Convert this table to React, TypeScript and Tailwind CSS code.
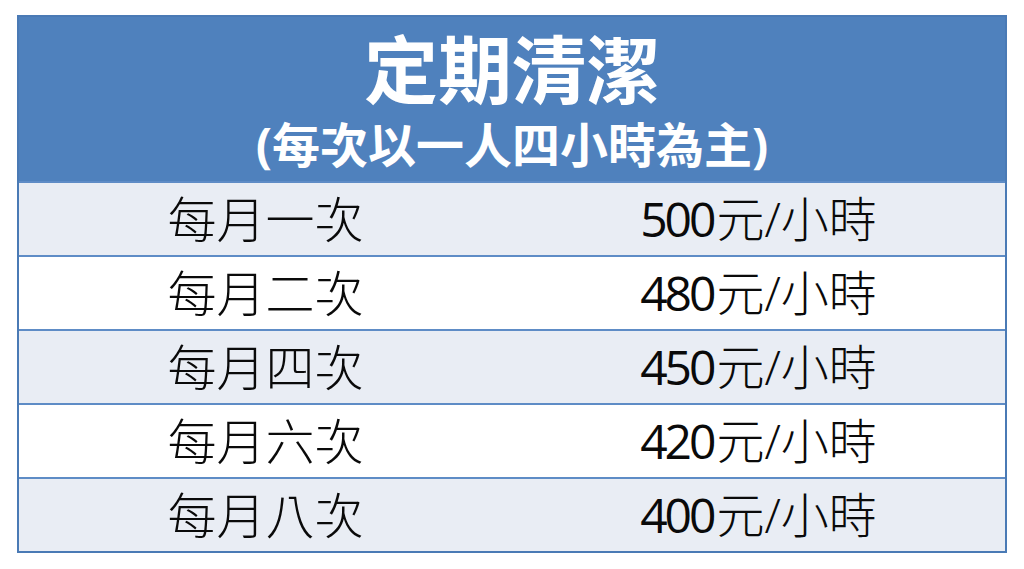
import React from "react";

const rows = [
  { label: "每月一次", price: "500" },
  { label: "每月二次", price: "480" },
  { label: "每月四次", price: "450" },
  { label: "每月六次", price: "420" },
  { label: "每月八次", price: "400" },
];

export default function App() {
  return (
    <div
      className="w-[1024px] h-[569px] bg-white pt-[15px] pl-[17px]"
      style={{ fontFamily: '"Open Sans", "Noto Sans CJK TC", sans-serif' }}
    >
      <div className="w-[990px] border-2 border-[#4a7ab5]">
        <div className="h-[164px] bg-[#4f81bd] flex flex-col items-center text-white font-bold">
          <div className="mt-[16px] text-[74px] leading-none">定期清潔</div>
          <div className="mt-[14px] text-[48px] leading-none">(每次以一人四小時為主)</div>
        </div>
        {rows.map((r, i) => (
          <div
            key={r.price}
            className={`h-[74px] grid grid-cols-2 items-center text-center text-[#0a0a0a] font-light border-t-2 border-[#5e8cc6] ${
              i % 2 === 0 ? "bg-[#e9edf4]" : "bg-white"
            }`}
          >
            <div className="text-[49px] leading-none">{r.label}</div>
            <div className="text-[48px] leading-none">
              <span className="tracking-[-3px] font-normal">{r.price}</span>
              <span className="ml-[3px]">元/小時</span>
            </div>
          </div>
        ))}
      </div>
    </div>
  );
}
